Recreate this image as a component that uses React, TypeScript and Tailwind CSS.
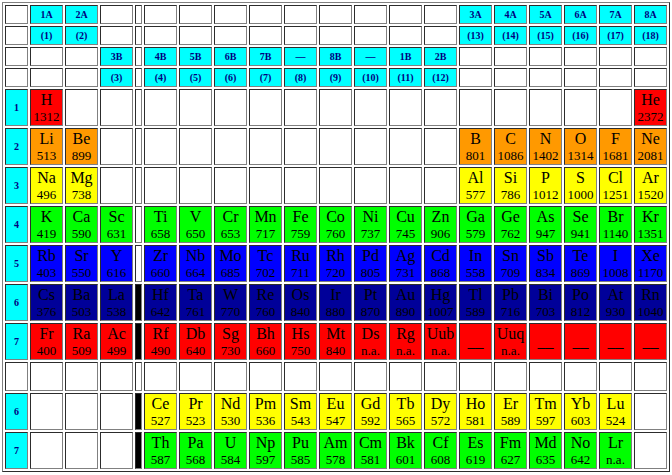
import React from "react";

type Cell =
  | null
  | { t: "h"; s: string }
  | { t: "k" }
  | { t: "e"; c: string; s: string; n: string };

const R = "bg-[#ff0000]";
const O = "bg-[#ff9900]";
const Y = "bg-[#ffff00]";
const G = "bg-[#00ff00]";
const B = "bg-[#0000ff]";
const N = "bg-[#000099]";

const h = (s: string): Cell => ({ t: "h", s });
const K: Cell = { t: "k" };
const nulls = (n: number): Cell[] => Array.from({ length: n }, () => null);
const els = (c: string, spec: string): Cell[] =>
  spec.split(",").map((p) => {
    const [s, n] = p.trim().split(" ");
    return { t: "e", c, s, n: n ?? "" } as Cell;
  });

const rows: Cell[][] = [
  [null, h("1A"), h("2A"), null, null, ...nulls(9), h("3A"), h("4A"), h("5A"), h("6A"), h("7A"), h("8A")],
  [null, h("(1)"), h("(2)"), null, null, ...nulls(9), h("(13)"), h("(14)"), h("(15)"), h("(16)"), h("(17)"), h("(18)")],
  [null, null, null, h("3B"), null, h("4B"), h("5B"), h("6B"), h("7B"), h("—"), h("8B"), h("—"), h("1B"), h("2B"), ...nulls(6)],
  [null, null, null, h("(3)"), null, h("(4)"), h("(5)"), h("(6)"), h("(7)"), h("(8)"), h("(9)"), h("(10)"), h("(11)"), h("(12)"), ...nulls(6)],
  [h("1"), ...els(R, "H 1312"), null, null, null, ...nulls(14), ...els(R, "He 2372")],
  [h("2"), ...els(O, "Li 513,Be 899"), null, null, ...nulls(9), ...els(O, "B 801,C 1086,N 1402,O 1314,F 1681,Ne 2081")],
  [h("3"), ...els(Y, "Na 496,Mg 738"), null, null, ...nulls(9), ...els(Y, "Al 577,Si 786,P 1012,S 1000,Cl 1251,Ar 1520")],
  [h("4"), ...els(G, "K 419,Ca 590,Sc 631"), null, ...els(G, "Ti 658,V 650,Cr 653,Mn 717,Fe 759,Co 760,Ni 737,Cu 745,Zn 906,Ga 579,Ge 762,As 947,Se 941,Br 1140,Kr 1351")],
  [h("5"), ...els(B, "Rb 403,Sr 550,Y 616"), null, ...els(B, "Zr 660,Nb 664,Mo 685,Tc 702,Ru 711,Rh 720,Pd 805,Ag 731,Cd 868,In 558,Sn 709,Sb 834,Te 869,I 1008,Xe 1170")],
  [h("6"), ...els(N, "Cs 376,Ba 503,La 538"), K, ...els(N, "Hf 642,Ta 761,W 770,Re 760,Os 840,Ir 880,Pt 870,Au 890,Hg 1007,Tl 589,Pb 716,Bi 703,Po 812,At 930,Rn 1040")],
  [h("7"), ...els(R, "Fr 400,Ra 509,Ac 499"), K, ...els(R, "Rf 490,Db 640,Sg 730,Bh 660,Hs 750,Mt 840,Ds n.a.,Rg n.a.,Uub n.a.,__,Uuq n.a.,__,__,__,__")],
  nulls(20),
  [h("6"), null, null, null, K, ...els(Y, "Ce 527,Pr 523,Nd 530,Pm 536,Sm 543,Eu 547,Gd 592,Tb 565,Dy 572,Ho 581,Er 589,Tm 597,Yb 603,Lu 524"), null],
  [h("7"), null, null, null, K, ...els(G, "Th 587,Pa 568,U 584,Np 597,Pu 585,Am 578,Cm 581,Bk 601,Cf 608,Es 619,Fm 627,Md 635,No 642,Lr n.a."), null],
];

const border = "border border-[#808080] [border-style:inset]";

function CellView({ cell }: { cell: Cell }) {
  if (cell === null) return <div className={`${border} bg-white`} />;
  if (cell.t === "k") return <div className={`${border} bg-black`} />;
  if (cell.t === "h")
    return (
      <div className={`${border} bg-[#00ffff] flex items-center justify-center text-[10px] font-bold text-[#000080] leading-none`}>
        {cell.s}
      </div>
    );
  return (
    <div className={`${border} ${cell.c} flex flex-col items-center justify-center text-black`}>
      <div className="text-[16px] leading-[18px] whitespace-nowrap">{cell.s}</div>
      <div className="text-[13px] leading-[15px] whitespace-nowrap">{cell.n}</div>
    </div>
  );
}

export default function App() {
  return (
    <div className="w-[672px] h-[475px] bg-white pt-[2px] pl-[2px] font-['Liberation_Serif',serif]">
      <div className="inline-grid grid-cols-[23px_repeat(3,33px)_7px_repeat(15,33px)] grid-rows-[repeat(4,19px)_repeat(7,37px)_29px_repeat(2,37px)] gap-[2px] p-[2px] border border-[#808080] [border-style:outset]">
        {rows.map((r, i) => r.map((c, j) => <CellView key={`${i}-${j}`} cell={c} />))}
      </div>
    </div>
  );
}
